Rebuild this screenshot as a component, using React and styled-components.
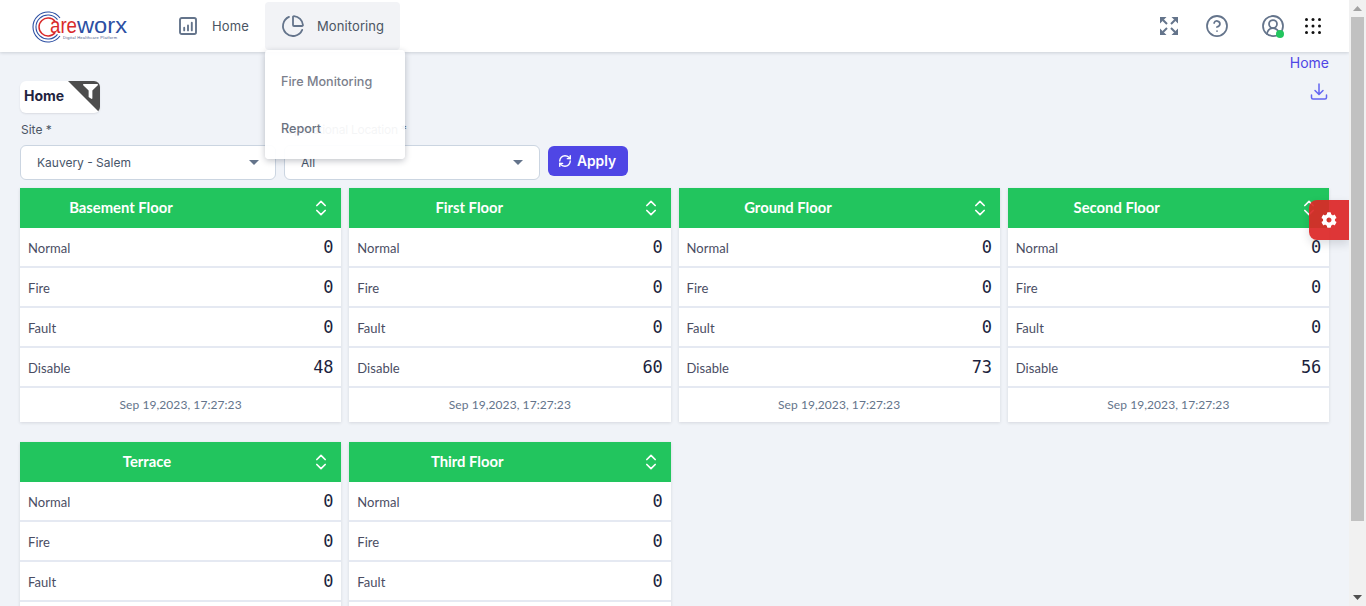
import React from 'react';
import styled, { createGlobalStyle } from 'styled-components';
import { FaCog, FaFilter } from 'react-icons/fa';
import { ChevronsUpDown, CircleHelp, CircleUserRound, ChartPie, RefreshCw } from 'lucide-react';

const Global = createGlobalStyle`
  html, body { margin: 0; height: 100%; overflow: hidden; }
  body { font-family: Inter, "Liberation Sans", sans-serif; background: #f0f3f8; }
  * { box-sizing: border-box; }
`;

const Shell = styled.div`display: flex; height: 100vh; overflow: hidden;`;
const Main = styled.div`position: relative; flex: 1; min-width: 0; overflow: hidden; background: #f0f3f8;`;

const Track = styled.div`
  width: 17px; flex: none; display: flex; flex-direction: column; background: #f1f1f1;
`;
const ArrowBox = styled.div`
  height: 17px; flex: none; display: flex; align-items: center; justify-content: center;
`;
const Thumb = styled.div`height: 504px; flex: none; margin: 0 2px; background: #c1c1c1;`;
const TrackSpace = styled.div`flex: 1;`;

const TopBar = styled.header`
  position: relative; z-index: 2; height: 52px; background: #fff; display: flex; align-items: flex-start;
  box-shadow: 0 1px 3px rgba(15, 23, 42, 0.16);
`;
const LogoBox = styled.div`width: 179px; padding: 10px 0 0 32px; flex: none;`;
const NavItem = styled.div`
  display: flex; align-items: center; height: 48px; margin-top: 2px; border-radius: 4px;
  font-size: 13px; font-weight: 400; color: #4b5563; letter-spacing: 0.1px;
  background: ${p => (p.$active ? '#f2f3f6' : 'transparent')};
  width: ${p => p.$w}px; padding-left: ${p => p.$pad}px; gap: ${p => p.$gap}px;
`;
const NavRight = styled.div`
  margin-left: auto; display: flex; align-items: center; height: 52px; padding-right: 24px; color: #64748b;
`;
const IconSlot = styled.div`
  position: relative; display: flex; align-items: center; justify-content: center; width: ${p => p.$w}px;
`;
const OnlineDot = styled.span`
  position: absolute; right: 17px; bottom: 0; width: 8px; height: 8px; border-radius: 50%; background: #22c55e;
`;

const Dropdown = styled.div`
  position: absolute; z-index: 3; left: 265px; top: 50px; width: 140px; height: 109px;
  border-radius: 4px; background: rgba(255, 255, 255, 0.94);
  box-shadow: 0 2px 6px rgba(15, 23, 42, 0.25);
  padding: 9px 16px; display: flex; flex-direction: column;
`;
const DropItem = styled.div`
  height: 46px; display: flex; align-items: center; font-size: 12.6px; font-weight: 500; color: ${p => p.$c};
  padding-top: ${p => p.$nudge || 0}px;
`;

const SideTab = styled.button`
  position: absolute; z-index: 3; right: 0; top: 200px; width: 40px; height: 40px; border: 0; padding: 0;
  background: rgba(220, 38, 38, 0.92); color: #fff; border-radius: 8px 0 0 8px;
  display: flex; align-items: center; justify-content: center; font-size: 16px;
  box-shadow: 0 4px 10px rgba(15, 23, 42, 0.14);
`;

const Page = styled.main`padding: 0 20px;`;
const Crumb = styled.div`
  display: flex; justify-content: flex-end; padding-top: 2px; height: 29px; line-height: 18px; font-size: 14px; color: #4f46e5;
`;
const ChipRow = styled.div`display: flex; justify-content: space-between; align-items: flex-start; height: 41px;`;
const Chip = styled.div`
  position: relative; width: 80px; height: 32px; border-radius: 6px; background: #fff; overflow: hidden;
  font-size: 14px; font-weight: 700; color: #1f2440; line-height: 30px; padding-left: 4px;
  box-shadow: 0 1px 2px rgba(15, 23, 42, 0.1);
`;
const ChipCorner = styled.div`
  position: absolute; right: 0; top: 0; width: 32px; height: 32px; background: #4d4d4d;
  clip-path: polygon(0 0, 100% 0, 100% 100%);
`;
const ChipIcon = styled.span`
  position: absolute; right: 2px; top: 3px; color: #fff; font-size: 15px; line-height: 0;
`;
const DownloadBtn = styled.span`color: #6366f1; line-height: 0; margin: 2px 1px 0 0;`;

const Filters = styled.div`display: grid; grid-template-columns: 256px 256px auto; gap: 8px; justify-content: start;`;
const Field = styled.div`display: flex; flex-direction: column;`;
const FieldLabel = styled.label`
  font-size: 12px; line-height: 15px; color: #4b5563; padding-left: 1px; margin-bottom: 8px;
  letter-spacing: ${p => p.$ls || 0}px;
`;
const Select = styled.div`
  height: 35px; border: 1px solid #cbd5e1; border-radius: 6px; background: #fff; display: flex; align-items: center;
  justify-content: space-between; padding: 0 16px; font-size: 12px; color: #475569;
`;
const Caret = styled.span`
  width: 0; height: 0; border-left: 5px solid transparent; border-right: 5px solid transparent; border-top: 5px solid #64748b;
`;
const ApplyBtn = styled.button`
  align-self: start; margin-top: 24px; width: 80px; height: 30px; border: 0; border-radius: 6px;
  background: #4f46e5; color: #fff; font: 600 13.8px Inter, sans-serif; display: flex; align-items: center;
  justify-content: center; gap: 5px; padding: 0 2px 0 0;
`;

const Grid = styled.div`
  display: grid; grid-template-columns: repeat(4, 1fr); column-gap: 8px; row-gap: 20px; margin-top: 8px;
`;
const Card = styled.section`background: #fff; box-shadow: 0 1px 3px rgba(15, 23, 42, 0.12);`;
const CardHead = styled.div`
  height: 40px; background: #22c55e; color: #fff; display: flex; align-items: center; justify-content: space-between;
  padding-right: 10px;
`;
const Title = styled.h3`
  margin: 0 0 2px; font: 700 14.8px Lato, sans-serif; text-align: center; width: ${p => p.$center * 2}px;
`;
const Row = styled.div`
  height: 40px; border-bottom: 2px solid #e5e9f2; display: flex; justify-content: space-between; padding: 0 8px;
  font: 400 13px Lato, sans-serif; color: #4a4d63;
`;
const RowLabel = styled.span`padding-top: 12px; line-height: 16px; letter-spacing: 0.05px;`;
const Digits = styled.span`
  padding-top: 11px; font: 400 17px/17px "DejaVu Sans Mono", monospace; color: #1c1f3d;
  letter-spacing: -0.2px;
`;
const CardFoot = styled.div`
  height: 34px; display: flex; align-items: center; justify-content: center; font: 400 12px Lato, sans-serif; color: #64748b;
  letter-spacing: 0.07px; padding-bottom: 2px;
`;

const Logo = () => (
  <svg width="98" height="34" viewBox="0 0 98 34" fill="none" role="img">
    <path d="M28 8A15 15 0 1 0 28 26" stroke="#2c4fa3" strokeWidth="1.1" />
    <path d="M25.5 9.7A12 12 0 1 0 25.5 24.3" stroke="#2c4fa3" strokeWidth="1.1" />
    <path d="M23 11.3A9 9 0 1 0 23 22.7" stroke="#d92b2b" strokeWidth="1.5" />
    <text x="18" y="23" fontFamily="Liberation Sans, sans-serif" fontSize="22" fill="#d92b2b" textLength="27" lengthAdjust="spacingAndGlyphs">are</text>
    <text x="45" y="23" fontFamily="Liberation Sans, sans-serif" fontSize="22" fill="#2c4fa3" textLength="50" lengthAdjust="spacingAndGlyphs">worx</text>
    <text x="31" y="28.5" fontFamily="Liberation Sans, sans-serif" fontSize="4" fill="#4a5a8a" textLength="54">Digital Healthcare Platform</text>
  </svg>
);
const BarsIcon = () => (
  <svg width="18" height="18" viewBox="0 0 18 18" fill="none" stroke="#64748b" strokeWidth="1.9" strokeLinecap="round">
    <rect x="1" y="1" width="16" height="16" rx="1.8" />
    <path d="M5.2 13.4v-2.6M9 13.4v-5M12.8 13.4v-7.6" />
  </svg>
);
const ExpandIcon = () => (
  <svg width="18" height="18" viewBox="0 0 18 18" fill="#64748b" stroke="#64748b" strokeWidth="2">
    <path strokeWidth="0" d="M0 0h6.5L0 6.5zM18 0v6.5L11.5 0zM0 18v-6.5L6.5 18zM18 18h-6.5L18 11.5z" />
    <path fill="none" d="M3 3l4 4M15 3l-4 4M3 15l4-4M15 15l-4-4" />
  </svg>
);
const AppsIcon = () => (
  <svg width="16" height="16" viewBox="0 0 16 16" fill="#111">
    {[1.5, 8, 14.5].flatMap(y => [1.5, 8, 14.5].map(x => <circle key={`${x}-${y}`} cx={x} cy={y} r="1.5" />))}
  </svg>
);
const DownloadIcon = () => (
  <svg width="18" height="18" viewBox="0 0 18 18" fill="none" stroke="currentColor" strokeWidth="1.5" strokeLinecap="round" strokeLinejoin="round">
    <path d="M9 1v10M5 7.5l4 4 4-4M1.5 12v2.5a1.5 1.5 0 0 0 1.5 1.5h12a1.5 1.5 0 0 0 1.5-1.5V12" />
  </svg>
);
const Tri = ({ up }) => (
  <svg width="9" height="5" viewBox="0 0 9 5" fill={up ? '#a3a3a3' : '#505050'}>
    <path d={up ? 'M4.5 0L9 5H0z' : 'M0 0h9L4.5 5z'} />
  </svg>
);

const floors = [
  { name: 'Basement Floor', center: 101, disable: 48 },
  { name: 'First Floor', center: 120, disable: 60 },
  { name: 'Ground Floor', center: 109.5, disable: 73 },
  { name: 'Second Floor', center: 109, disable: 56 },
  { name: 'Terrace', center: 127, disable: 41 },
  { name: 'Third Floor', center: 118, disable: 52 },
];

const FloorCard = ({ name, center, disable }) => (
  <Card>
    <CardHead>
      <Title $center={center}>{name}</Title>
      <ChevronsUpDown size={20} strokeWidth={2} />
    </CardHead>
    {[['Normal', 0], ['Fire', 0], ['Fault', 0], ['Disable', disable]].map(([label, value]) => (
      <Row key={label}>
        <RowLabel>{label}</RowLabel>
        <Digits>{value}</Digits>
      </Row>
    ))}
    <CardFoot>Sep 19,2023, 17:27:23</CardFoot>
  </Card>
);

export default function App() {
  return (
    <Shell>
      <Global />
      <Main>
        <TopBar>
          <LogoBox><Logo /></LogoBox>
          <NavItem $w={86} $pad={0} $gap={15}><BarsIcon />Home</NavItem>
          <NavItem $active $w={135} $pad={16} $gap={12}><ChartPie size={24} color="#64748b" strokeWidth={1.8} />Monitoring</NavItem>
          <NavRight>
            <IconSlot $w={40}><ExpandIcon /></IconSlot>
            <IconSlot $w={56}><CircleHelp size={24} strokeWidth={1.75} /></IconSlot>
            <IconSlot $w={56}><CircleUserRound size={24} strokeWidth={1.75} /><OnlineDot /></IconSlot>
            <IconSlot $w={24}><AppsIcon /></IconSlot>
          </NavRight>
        </TopBar>
        <Dropdown>
          <DropItem $c="#7b808c">Fire Monitoring</DropItem>
          <DropItem $c="#6b7280" $nudge={2}>Report</DropItem>
        </Dropdown>
        <SideTab aria-label="Settings"><FaCog /></SideTab>
        <Page>
          <Crumb>Home</Crumb>
          <ChipRow>
            <Chip>Home<ChipCorner /><ChipIcon><FaFilter /></ChipIcon></Chip>
            <DownloadBtn><DownloadIcon /></DownloadBtn>
          </ChipRow>
          <Filters>
            <Field><FieldLabel>Site *</FieldLabel><Select>Kauvery - Salem<Caret /></Select></Field>
            <Field><FieldLabel $ls={-0.25}>Operational Location *</FieldLabel><Select>All<Caret /></Select></Field>
            <ApplyBtn><RefreshCw size={14} strokeWidth={2.4} />Apply</ApplyBtn>
          </Filters>
          <Grid>
            {floors.map(f => <FloorCard key={f.name} {...f} />)}
          </Grid>
        </Page>
      </Main>
      <Track>
        <ArrowBox><Tri up /></ArrowBox>
        <Thumb />
        <TrackSpace />
        <ArrowBox><Tri /></ArrowBox>
      </Track>
    </Shell>
  );
}
